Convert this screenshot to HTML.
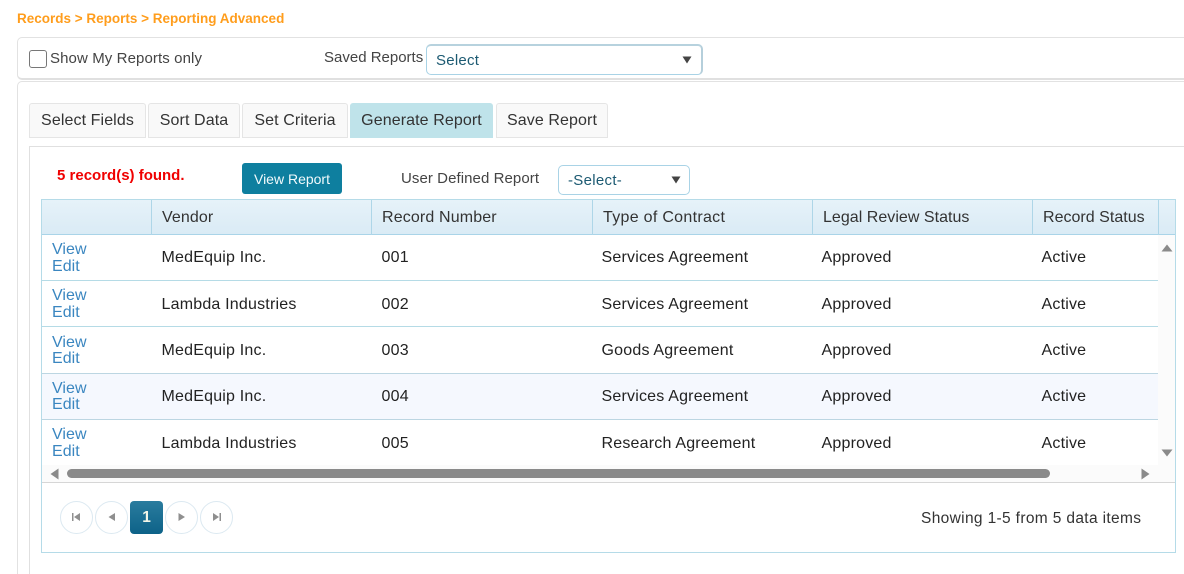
<!DOCTYPE html>
<html><head><meta charset="utf-8">
<style>
html,body{margin:0;padding:0;background:#fff;width:1184px;height:574px;overflow:hidden}
body{font-family:"Liberation Sans",Arial,sans-serif;font-size:15px;color:#333;position:relative}
.a{position:absolute;white-space:nowrap}
.b{position:absolute;box-sizing:border-box}
.tab{position:absolute;top:103px;height:35px;box-sizing:border-box;background:#f9f9f9;border:1px solid #e5e5e5;border-radius:3px 3px 0 0;line-height:34px;text-align:center;font-size:16px;color:#333;letter-spacing:.1px}
.th{position:absolute;top:209px;font-size:16px;color:#333;white-space:nowrap;line-height:18px;letter-spacing:.1px}
.td{position:absolute;font-size:16px;color:#222;white-space:nowrap;line-height:18px;letter-spacing:.2px;margin-top:1px;margin-left:-.5px}
.lnk{position:absolute;left:52px;font-size:16px;color:#3a86c0;line-height:16.5px;letter-spacing:.05px;margin-top:1px}
.vl{position:absolute;top:200px;height:35px;width:1px;background:#aed6e8}
.hl{position:absolute;left:42px;width:1116px;height:1px;background:#b5dbe6}
.pg{position:absolute;top:501px;width:33px;height:33px;box-sizing:border-box;border:1px solid #dce9f1;border-radius:50%;background:#fff}
</style></head><body>
<div class="a" style="left:17px;top:11px;font-size:13.5px;font-weight:bold;color:#ff9d1c;line-height:16px">Records &gt; Reports &gt; Reporting Advanced</div>

<div class="b" style="left:17px;top:37px;width:1190px;height:43px;border:1px solid #e2e2e2;border-bottom:2px solid #e0e0e0;border-radius:5px"></div>
<div class="b" style="left:29px;top:50px;width:17.500px;height:17.500px;border:1.5px solid #777;border-radius:3px;background:#fff"></div>
<div class="a" style="left:50px;top:50px;font-size:15px;color:#444;line-height:17px;letter-spacing:.1px">Show My Reports only</div>
<div class="a" style="left:324px;top:49px;font-size:15px;color:#444;line-height:17px">Saved Reports</div>
<div class="b" style="left:426px;top:44px;width:277px;height:31px;border:1px solid #a9d3e6;border-top:2px solid #b7d2de;border-right:2px solid #b5cfdb;border-radius:5px;background:#fff"></div>
<div class="a" style="left:436px;top:52px;font-size:15px;color:#1c5a72;line-height:17px;letter-spacing:.25px">Select</div>
<svg class="a" style="left:682px;top:56px" width="10" height="8"><path d="M0.5 0.5H9.5L5 7.5Z" fill="#444"/></svg>

<div class="b" style="left:17px;top:81px;width:1190px;height:520px;border:1px solid #e2e2e2;border-radius:5px"></div>

<div class="tab" style="left:29px;width:117px">Select Fields</div>
<div class="tab" style="left:148px;width:92px">Sort Data</div>
<div class="tab" style="left:242px;width:106px">Set Criteria</div>
<div class="tab" style="left:350px;width:143px;background:#bfe3ea;border-color:#bfe3ea">Generate Report</div>
<div class="tab" style="left:496px;width:112px">Save Report</div>

<div class="b" style="left:29px;top:146px;width:1180px;height:440px;border:1px solid #e0e0e0"></div>

<div class="a" style="left:57px;top:167px;font-size:15px;font-weight:bold;color:#f00000;line-height:17px">5 record(s) found.</div>
<div class="b" style="left:242px;top:163px;width:100px;height:31px;background:#0e7f9f;border-radius:3px;color:#f2fafc;font-size:14px;line-height:33px;text-align:center">View Report</div>
<div class="a" style="left:401px;top:170px;font-size:15px;color:#444;line-height:17px;letter-spacing:.07px">User Defined Report</div>
<div class="b" style="left:558px;top:165px;width:132px;height:30px;border:1px solid #a9d3e6;border-radius:5px;background:#fff"></div>
<div class="a" style="left:568px;top:172px;font-size:15px;color:#1c5a72;line-height:17px;letter-spacing:.3px">-Select-</div>
<svg class="a" style="left:671px;top:176px" width="10" height="8"><path d="M0.5 0.5H9.5L5 7.5Z" fill="#444"/></svg>

<!-- grid -->
<div class="b" style="left:41px;top:199px;width:1135px;height:354px;border:1px solid #b5dbe8;background:#fff"></div>
<div class="b" style="left:42px;top:200px;width:1133px;height:35px;background:linear-gradient(#e6f2f9,#daebf5);border-bottom:1px solid #a9d4e8"></div>
<div class="vl" style="left:151px"></div>
<div class="vl" style="left:371px"></div>
<div class="vl" style="left:592px"></div>
<div class="vl" style="left:812px"></div>
<div class="vl" style="left:1032px"></div>
<div class="vl" style="left:1158px"></div>
<div class="th" style="left:162px">Vendor</div>
<div class="th" style="left:382px;letter-spacing:.14px">Record Number</div>
<div class="th" style="left:603px;letter-spacing:.3px">Type of Contract</div>
<div class="th" style="left:823px;letter-spacing:.03px">Legal Review Status</div>
<div class="th" style="left:1043px;letter-spacing:.02px">Record Status</div>

<div class="b" style="left:42px;top:374px;width:1116px;height:45px;background:#f5f8fe"></div>
<div class="hl" style="top:280px"></div>
<div class="hl" style="top:326px"></div>
<div class="hl" style="top:373px;background:#bcd6e2"></div>
<div class="hl" style="top:419px;background:#bcd6e2"></div>

<div class="lnk" style="top:241px">View<br>Edit</div>
<div class="td" style="left:162px;top:248px">MedEquip Inc.</div>
<div class="td" style="left:382px;top:248px">001</div>
<div class="td" style="left:602px;top:248px">Services Agreement</div>
<div class="td" style="left:822px;top:248px">Approved</div>
<div class="td" style="left:1042px;top:248px">Active</div>

<div class="lnk" style="top:287px">View<br>Edit</div>
<div class="td" style="left:162px;top:295px">Lambda Industries</div>
<div class="td" style="left:382px;top:295px">002</div>
<div class="td" style="left:602px;top:295px">Services Agreement</div>
<div class="td" style="left:822px;top:295px">Approved</div>
<div class="td" style="left:1042px;top:295px">Active</div>

<div class="lnk" style="top:334px;line-height:16px">View<br>Edit</div>
<div class="td" style="left:162px;top:341px">MedEquip Inc.</div>
<div class="td" style="left:382px;top:341px">003</div>
<div class="td" style="left:602px;top:341px">Goods Agreement</div>
<div class="td" style="left:822px;top:341px">Approved</div>
<div class="td" style="left:1042px;top:341px">Active</div>

<div class="lnk" style="top:380px;line-height:16px">View<br>Edit</div>
<div class="td" style="left:162px;top:387px">MedEquip Inc.</div>
<div class="td" style="left:382px;top:387px">004</div>
<div class="td" style="left:602px;top:387px">Services Agreement</div>
<div class="td" style="left:822px;top:387px">Approved</div>
<div class="td" style="left:1042px;top:387px">Active</div>

<div class="lnk" style="top:426px">View<br>Edit</div>
<div class="td" style="left:162px;top:434px">Lambda Industries</div>
<div class="td" style="left:382px;top:434px">005</div>
<div class="td" style="left:602px;top:434px">Research Agreement</div>
<div class="td" style="left:822px;top:434px">Approved</div>
<div class="td" style="left:1042px;top:434px">Active</div>

<!-- scrollbars -->
<div class="b" style="left:1158px;top:235px;width:17px;height:248px;background:#fbfbfb"></div>
<div class="b" style="left:42px;top:465px;width:1133px;height:17px;background:#fbfbfb"></div>
<svg class="a" style="left:1161px;top:244px" width="12" height="8"><path d="M0.5 7.5L6 0.5L11.5 7.5Z" fill="#8a8a8a"/></svg>
<svg class="a" style="left:1161px;top:449px" width="12" height="8"><path d="M0.5 0.5L6 7.5L11.5 0.5Z" fill="#8a8a8a"/></svg>
<svg class="a" style="left:50px;top:468px" width="9" height="12"><path d="M8.5 0.5V11.5L0.5 6Z" fill="#8a8a8a"/></svg>
<svg class="a" style="left:1141px;top:468px" width="9" height="12"><path d="M0.5 0.5V11.5L8.5 6Z" fill="#8a8a8a"/></svg>
<div class="b" style="left:67px;top:469px;width:983px;height:9px;background:#8a8a8a;border-radius:5px"></div>
<div class="b" style="left:42px;top:482px;width:1133px;height:1px;background:#d6d6d6"></div>

<!-- pager -->
<div class="pg" style="left:60px"></div>
<div class="pg" style="left:95px"></div>
<div class="pg" style="left:165px"></div>
<div class="pg" style="left:200px"></div>
<svg class="a" style="left:71px;top:512px" width="10" height="10"><path d="M1 1H2.5V9H1ZM9 1V9L3 5Z" fill="#8f8f8f"/></svg>
<svg class="a" style="left:107px;top:512px" width="10" height="10"><path d="M8 1V9L1.500 5Z" fill="#8f8f8f"/></svg>
<svg class="a" style="left:177px;top:512px" width="10" height="10"><path d="M1.500 1V9L8 5Z" fill="#8f8f8f"/></svg>
<svg class="a" style="left:212px;top:512px" width="10" height="10"><path d="M1 1V9L7 5ZM7.500 1H9V9H7.500Z" fill="#8f8f8f"/></svg>
<div class="b" style="left:130px;top:501px;width:33px;height:33px;background:linear-gradient(#2a7c9e,#0d6288);border-radius:4px;color:#f3f6e8;font-weight:bold;font-size:15.500px;line-height:33px;text-align:center">1</div>
<div class="a" style="left:921px;top:510px;font-size:15.5px;color:#333;line-height:18px;letter-spacing:.35px">Showing 1-5 from 5 data items</div>
</body></html>
